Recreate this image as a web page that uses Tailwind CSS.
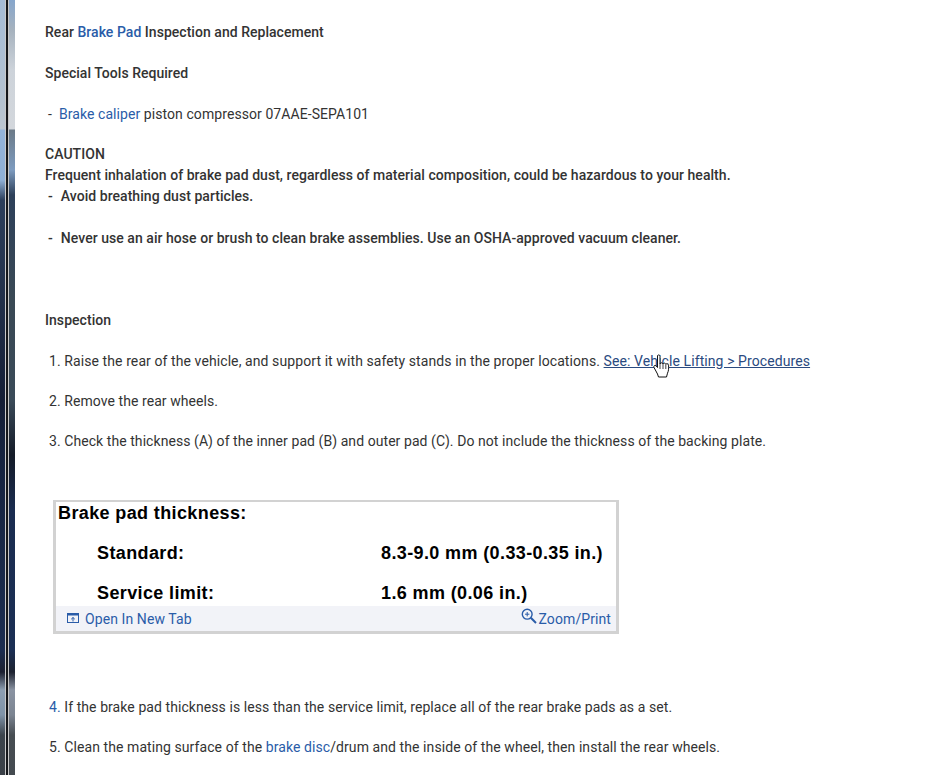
<!DOCTYPE html>
<html lang="en">
<head>
    <meta charset="UTF-8">
    <title>Rear Brake Pad Inspection and Replacement</title>
    <script src="https://cdn.jsdelivr.net/npm/@tailwindcss/browser@4"></script>
</head>
<body class="bg-white overflow-hidden">
    <div class="flex h-[775px] w-[931px] overflow-hidden">
        <!-- Window edge showing desktop behind -->
        <div class="flex w-[15px] shrink-0">
            <div class="w-[5px] bg-[linear-gradient(to_bottom,#a5bcd6_0px,#b4c2d0_100px,#bcc6d0_129px,#94b4da_130px,#8fb0d6_180px,#2c3f5c_200px,#22304a_300px,#141e36_400px,#16233f_450px,#1b2d50_650px,#1c2030_672px,#8d9fb2_690px,#7f93a8_715px,#3c444c_735px,#3a4047_775px)]"></div>
            <div class="w-[4px] border-x border-[#c8c8c8] bg-[#14161a]"></div>
            <div class="w-[6px] bg-[linear-gradient(to_bottom,#86a6cc_0px,#a6b2be_30px,#cdd3da_70px,#d3d7dc_129px,#6b7a88_130px,#7d9bbf_170px,#2d405a_195px,#3a4955_300px,#3a4a58_400px,#141b28_455px,#1a2c50_510px,#1b2f54_650px,#1d2230_672px,#8a93a2_690px,#7b8491_715px,#474d52_735px,#444a50_775px)]"></div>
        </div>

        <!-- Article -->
        <main class="relative flex-1 pl-[30px] pt-[22px] font-['Roboto',sans-serif] text-[14px] leading-[21px] text-[#333] tracking-[0.09px]">
            <p class="font-medium tracking-[0.035px]">Rear <a href="#" class="text-[#2a5ca8]">Brake Pad</a> Inspection and Replacement</p>
            <p class="mt-[20px] font-medium tracking-[0.03px]">Special Tools Required</p>
            <p class="mt-[20px] tracking-[0.07px]"><span class="pl-[3px] pr-[7px]">-</span><a href="#" class="text-[#2a5ca8]">Brake caliper</a> piston compressor 07AAE-SEPA101</p>

            <div class="mt-[19px] font-medium tracking-[0.045px]">
                <p>CAUTION</p>
                <p>Frequent inhalation of brake pad dust, regardless of material composition, could be hazardous to your health.</p>
                <p><span class="pl-[3px] pr-[8px]">-</span>Avoid breathing dust particles.</p>
                <p class="mt-[21px]"><span class="pl-[3px] pr-[8px]">-</span>Never use an air hose or brush to clean brake assemblies. Use an OSHA-approved vacuum cleaner.</p>
            </div>

            <p class="mt-[61px] font-medium tracking-[0.055px]">Inspection</p>
            <p class="mt-[20px] pl-[4px]">1. Raise the rear of the vehicle, and support it with safety stands in the proper locations. <a href="#" class="text-[#2a4a80] underline">See: Vehicle Lifting &gt; Procedures</a></p>
            <p class="mt-[19px] pl-[4px] tracking-[0.07px]">2. Remove the rear wheels.</p>
            <p class="mt-[19px] pl-[4px] tracking-[0.065px]">3. Check the thickness (A) of the inner pad (B) and outer pad (C). Do not include the thickness of the backing plate.</p>

            <!-- Spec figure -->
            <figure class="mt-[48px] ml-[8px] w-[566px] h-[134px] border-[3px] border-t-2 border-[#d2d2d2] bg-white flex flex-col font-['Liberation_Sans',sans-serif] font-bold text-[18px] leading-[20px] text-black tracking-[0.38px]">
                <div class="flex-1 pl-[2px] pt-[1px]">
                    <p>Brake pad thickness:</p>
                    <div class="mt-[20px] pl-[39px] flex"><span class="w-[284px]">Standard:</span><span>8.3-9.0 mm (0.33-0.35 in.)</span></div>
                    <div class="mt-[20px] pl-[39px] flex"><span class="w-[284px]">Service limit:</span><span>1.6 mm (0.06 in.)</span></div>
                </div>
                <figcaption class="h-[25px] bg-[#f2f3f8] flex items-center justify-between pl-[11px] pr-[5px] font-['Roboto',sans-serif] font-normal text-[14px] tracking-[0.09px] text-[#2a5ca8]">
                    <a href="#" class="flex items-center gap-[6px]">
                        <svg width="12" height="11" viewBox="0 0 12 11" fill="none" stroke="#2a5ca8"><rect x="0.5" y="0.5" width="11" height="9" stroke-width="1"/><path d="M1 1.5h10" stroke-width="2"/><path d="M6 8.5V4.500M4.200 6.200 6 4.500l1.800 1.700" stroke-width="1"/></svg>
                        Open In New Tab
                    </a>
                    <a href="#" class="flex items-center gap-[2px]">
                        <svg class="-mt-[6px]" width="16" height="16" viewBox="0 0 16 16" fill="none" stroke="#2a5ca8"><circle cx="6.200" cy="6.200" r="4.900" stroke-width="1.400"/><path d="M6.200 4v4.400M4 6.200h4.400" stroke-width="1"/><path d="M9.800 9.800 15 15" stroke-width="2"/></svg>
                        Zoom/Print
                    </a>
                </figcaption>
            </figure>

            <p class="mt-[63px] pl-[4px] tracking-[0.075px]"><span class="text-[#2a5ca8]">4.</span> If the brake pad thickness is less than the service limit, replace all of the rear brake pads as a set.</p>
            <p class="mt-[19px] pl-[4px] tracking-[0.08px]">5. Clean the mating surface of the <a href="#" class="text-[#2a5ca8]">brake disc</a>/drum and the inside of the wheel, then install the rear wheels.</p>

            <!-- Mouse pointer -->
            <svg class="absolute left-[638px] top-[354px]" width="18" height="26" viewBox="0 0 18 26">
                <path d="M4.500 1.500c1 -1 2.500 -.6 2.500 1V10c.3-1.600 2.600-1.600 3 0 .4-1.300 2.500-1.200 2.800.3.6-1 2.500-.7 2.700.9.3 2.600.2 5.600-1 8l-1 3.800H5.500L4.500 20 1 13.500c-.7-1.500.8-2.800 2-1.700l1.500 1.700z" fill="#fff" stroke="#111" stroke-width="1" stroke-linejoin="round"/>
                <path d="M7 10v5M10 10v5M12.800 10.500V15" stroke="#111" stroke-width=".8" fill="none"/>
            </svg>
        </main>
    </div>
</body>
</html>
